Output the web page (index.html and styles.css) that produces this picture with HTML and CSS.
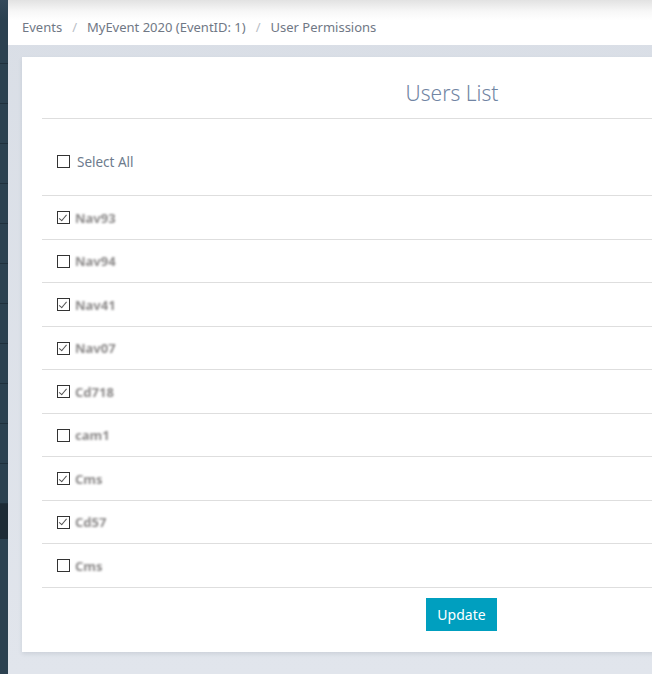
FILE: index.html
```html
<!DOCTYPE html>
<html>
<head>
<meta charset="utf-8">
<link rel="stylesheet" href="styles.css">
</head>
<body>
<div class="sidebar">
  <div class="nav-item top"></div>
  <div class="nav-item"></div>
  <div class="nav-item"></div>
  <div class="nav-item"></div>
  <div class="nav-item"></div>
  <div class="nav-item"></div>
  <div class="nav-item"></div>
  <div class="nav-item"></div>
  <div class="nav-item"></div>
  <div class="nav-item"></div>
  <div class="nav-item"></div>
  <div class="nav-item"></div>
  <div class="nav-item active"></div>
</div>
<div class="main">
  <div class="topbar">
    <nav class="breadcrumb">
      <span class="crumb">Events</span>
      <span class="sep">/</span>
      <span class="crumb">MyEvent 2020 (EventID: 1)</span>
      <span class="sep">/</span>
      <span class="crumb">User Permissions</span>
    </nav>
  </div>
  <div class="content">
    <div class="card">
      <h2 class="card-title">Users List</h2>
      <div class="select-all">
        <span class="cb"></span>
        <span class="select-label">Select All</span>
      </div>
      <ul class="users">
        <li class="user"><span class="cb checked"></span><span class="uname">Nav93</span></li>
        <li class="user"><span class="cb"></span><span class="uname">Nav94</span></li>
        <li class="user"><span class="cb checked"></span><span class="uname">Nav41</span></li>
        <li class="user"><span class="cb checked"></span><span class="uname">Nav07</span></li>
        <li class="user"><span class="cb checked"></span><span class="uname">Cd718</span></li>
        <li class="user"><span class="cb"></span><span class="uname">cam1</span></li>
        <li class="user"><span class="cb checked"></span><span class="uname">Cms</span></li>
        <li class="user"><span class="cb checked"></span><span class="uname">Cd57</span></li>
        <li class="user"><span class="cb"></span><span class="uname">Cms</span></li>
      </ul>
      <div class="actions">
        <button class="btn-update">Update</button>
      </div>
    </div>
  </div>
</div>
</body>
</html>
```

FILE: styles.css
```css
* { box-sizing: border-box; }
html, body { margin: 0; padding: 0; }
body {
  width: 652px;
  height: 674px;
  overflow: hidden;
  display: flex;
  background: #dde2ea;
  font-family: "Noto Sans", "Open Sans", sans-serif;
}
.sidebar {
  width: 8px;
  flex-shrink: 0;
  height: 674px;
  background: #2b4150;
  display: flex;
  flex-direction: column;
}
.nav-item {
  height: 40px;
  flex-shrink: 0;
  border-bottom: 1px solid #1f303c;
}
.nav-item.top { height: 64px; background: linear-gradient(#34495a, #2b4150 30%); }
.nav-item.active { height: 35px; background: #1d2b36; border-bottom: none; }
.main {
  flex: 1;
  display: flex;
  flex-direction: column;
  min-width: 0;
  background: linear-gradient(180deg, #d9dee6, #e1e5ec);
}
.topbar {
  height: 45px;
  flex-shrink: 0;
  background: linear-gradient(180deg, #e2e2e2 0%, #f7f7f7 25%, #ffffff 45%, #ffffff 100%);
  padding-left: 14px;
  display: flex;
  align-items: center;
}
.breadcrumb {
  display: flex;
  align-items: center;
  gap: 10px;
  font-size: 13px;
  color: #707885;
  padding-top: 8px;
}
.sep { color: #b9bec6; }
.content {
  padding: 12px 0 0 14px;
}
.card {
  width: 860px;
  height: 595px;
  background: #fff;
  padding: 0 20px;
  box-shadow: 0 2px 4px rgba(60, 70, 90, 0.12);
  display: flex;
  flex-direction: column;
}
.card-title {
  margin: 0;
  padding: 23px 0 12px;
  line-height: 26px;
  font-size: 21px;
  font-weight: 300;
  color: #7185a3;
  text-align: center;
  border-bottom: 1px solid #dedede;
}
.select-all {
  display: flex;
  align-items: center;
  padding: 32px 15px 23px;
  height: 77px;
  border-bottom: 1px solid #dedede;
}
.select-label {
  margin-left: 7px;
  font-size: 13.5px;
  color: #6d7b8d;
  line-height: 20px;
}
.cb {
  width: 13px;
  height: 13px;
  border: 1.5px solid #333;
  background: #fff;
  flex-shrink: 0;
  position: relative;
}
.cb.checked::after {
  content: "";
  position: absolute;
  left: 2.5px;
  top: 0.5px;
  width: 3px;
  height: 6.5px;
  border-right: 1.5px solid #555;
  border-bottom: 1.5px solid #555;
  transform: rotate(40deg);
}
.users {
  list-style: none;
  margin: 0;
  padding: 0;
}
.user {
  display: flex;
  align-items: center;
  padding-left: 15px;
  height: 44px;
  border-bottom: 1px solid #dedede;
}
.user:nth-child(even) { height: 43px; }
.uname {
  margin-left: 5px;
  font-size: 13px;
  font-weight: 700;
  color: #8c8a8a;
  filter: blur(1.3px);
}
.actions {
  display: flex;
  justify-content: center;
  padding-top: 10px;
}
.btn-update {
  margin-left: 19px;
  width: 71px;
  height: 33px;
  border: none;
  border-radius: 0;
  background: #009fbf;
  color: #fff;
  font-family: "Noto Sans", "Open Sans", sans-serif;
  font-size: 14px;
  padding: 0;
}
```
